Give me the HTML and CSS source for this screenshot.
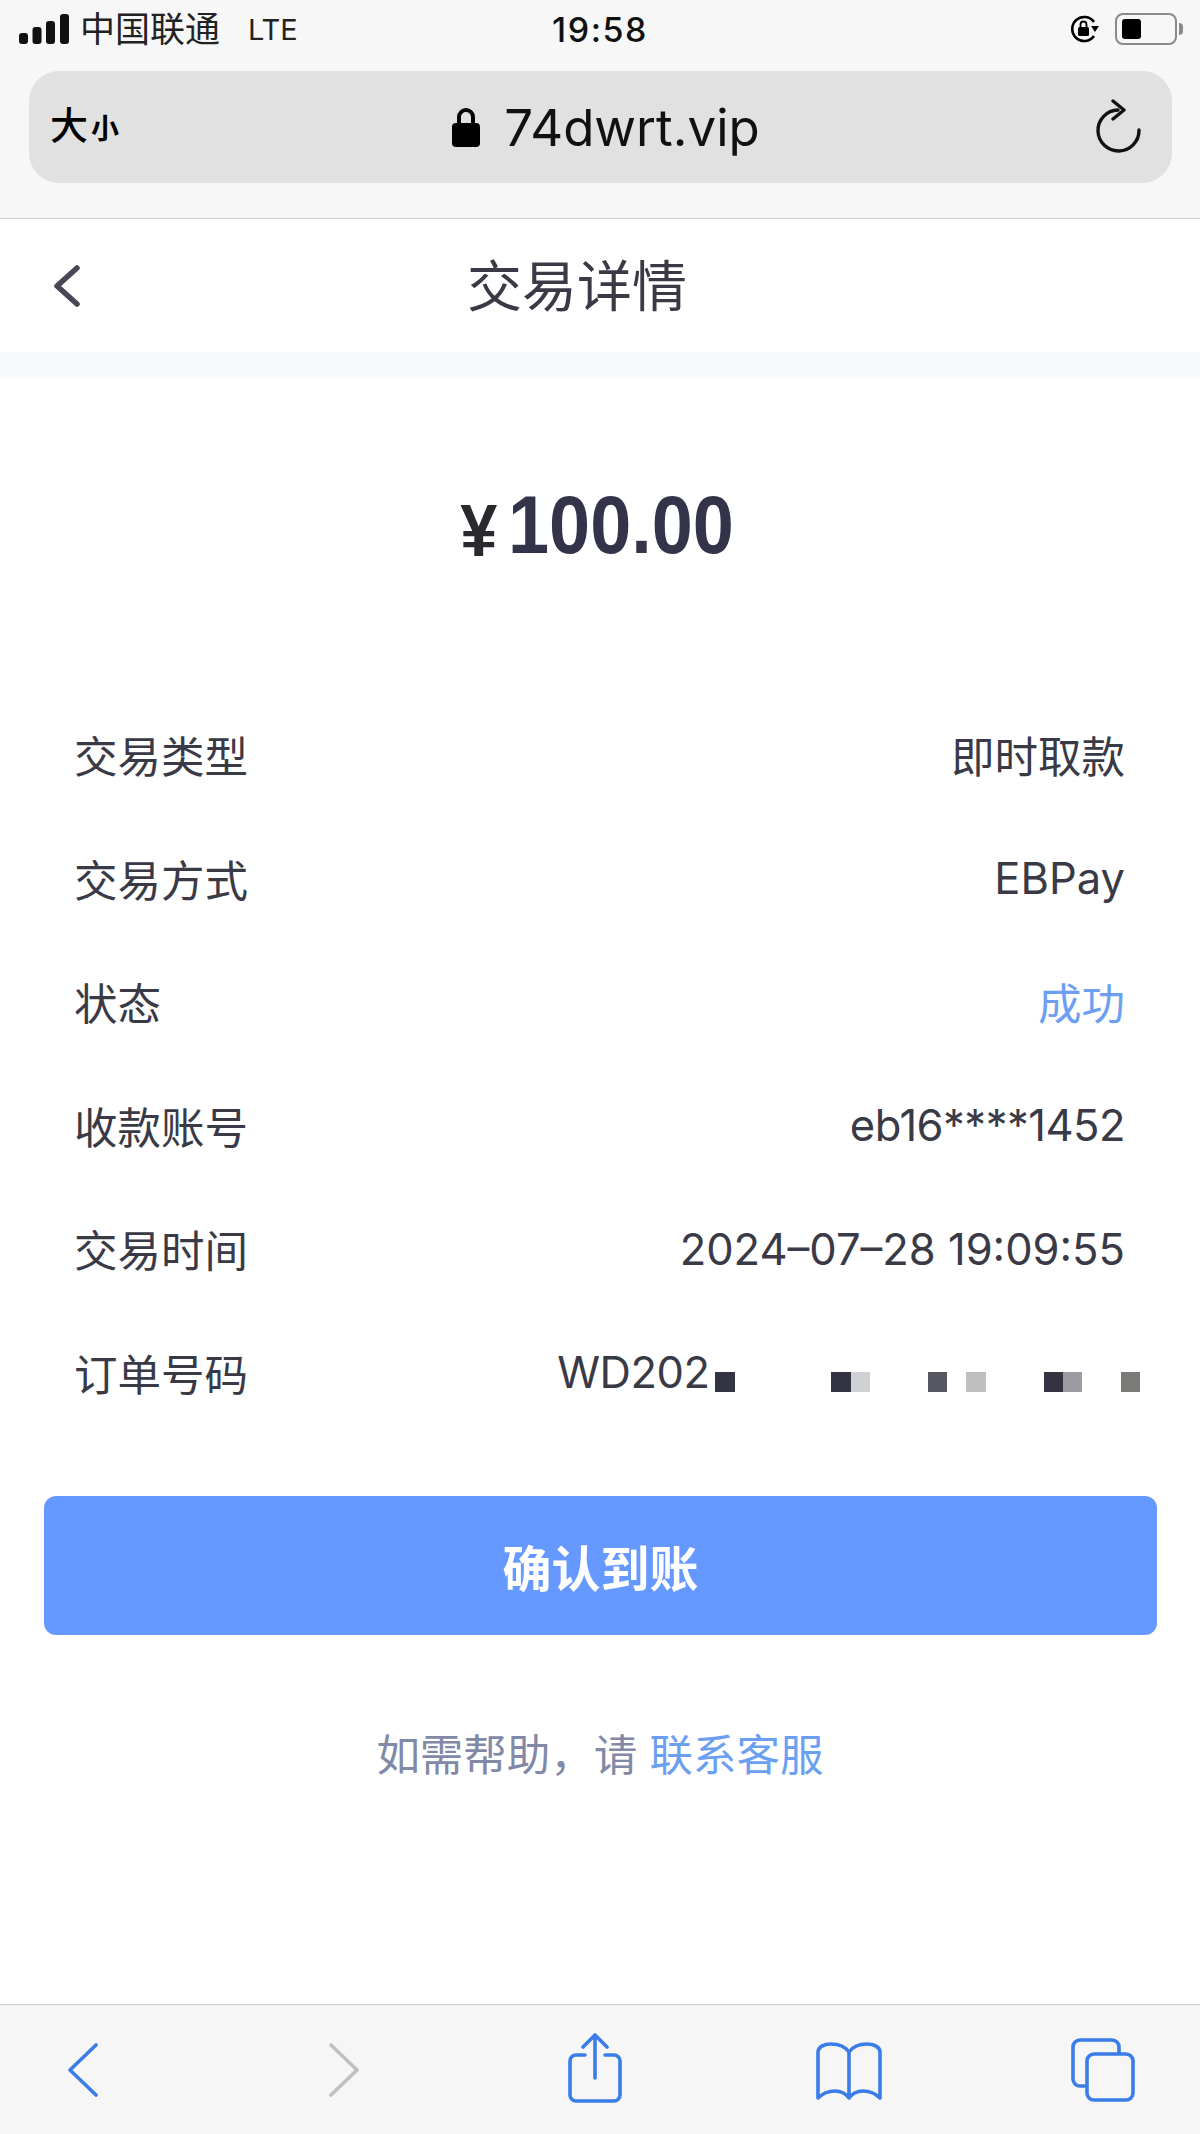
FILE: index.html
```html
<!DOCTYPE html>
<html lang="zh-CN">

<head>
    <meta charset="UTF-8">
    <meta name="viewport" content="width=device-width, initial-scale=1.0">
    <title>交易详情</title>
    <link rel="stylesheet" href="styles.css">
</head>

<body>
    <div class="browser-top">
        <div class="status-bar">
            <div class="status-left">
                <svg class="signal" width="50" height="30" viewBox="0 0 50 30">
                    <rect x="0" y="19" width="9" height="11" rx="3" />
                    <rect x="13.500" y="13" width="9" height="17" rx="3" />
                    <rect x="27" y="7" width="9" height="23" rx="3" />
                    <rect x="41" y="0" width="9" height="30" rx="3" />
                </svg>
                <span class="carrier">中国联通</span>
                <span class="network">LTE</span>
            </div>
            <div class="clock">19:58</div>
            <div class="status-right">
                <svg width="30" height="28" viewBox="0 0 30 28">
                    <path d="M25 7A12 12 0 1 0 25 21" fill="none" stroke="#000" stroke-width="2.600" />
                    <path d="M22 11h8l-4 6z" />
                    <rect x="9" y="12" width="11" height="9" rx="1.500" />
                    <path d="M11.500 12V9.500a3 3 0 0 1 6 0V12" fill="none" stroke="#000" stroke-width="1.800" />
                </svg>
                <div class="battery">
                    <div class="battery-fill"></div>
                </div>
                <div class="battery-nub"></div>
            </div>
        </div>

        <div class="url-bar">
            <div class="text-size">大<small>小</small></div>
            <div class="address">
                <svg width="28" height="40" viewBox="0 0 28 40">
                    <path d="M7 18V10a7 7 0 0 1 14 0v8" fill="none" stroke="#000" stroke-width="4" />
                    <rect x="0" y="16" width="28" height="24" rx="4" />
                </svg>
                <span>74dwrt.vip</span>
            </div>
            <svg class="reload" width="46" height="56" viewBox="0 0 46 56">
                <path d="M44 31A20.500 20.500 0 1 1 23 11" fill="none" stroke="#111" stroke-width="3.400" stroke-linecap="round" />
                <path d="M18 2L29 11L18 20" fill="none" stroke="#111" stroke-width="3.400" stroke-linecap="round" stroke-linejoin="round" />
            </svg>
        </div>
    </div>

    <div class="nav">
        <svg class="nav-back" width="26" height="42" viewBox="0 0 26 42">
            <path d="M23 3L3 21L23 39" fill="none" stroke="#474755" stroke-width="5.500" stroke-linecap="round" stroke-linejoin="round" />
        </svg>
        <h1>交易详情</h1>
    </div>
    <div class="band"></div>

    <main class="content">
        <div class="amount">
            <div class="amount-inner"><span class="yen">¥</span>100.00</div>
        </div>

        <div class="rows">
            <div class="row"><span>交易类型</span><span>即时取款</span></div>
            <div class="row"><span>交易方式</span><span>EBPay</span></div>
            <div class="row"><span>状态</span><span class="success">成功</span></div>
            <div class="row"><span>收款账号</span><span class="tight">eb16****1452</span></div>
            <div class="row"><span>交易时间</span><span>2024–07–28 19:09:55</span></div>
            <div class="row">
                <span>订单号码</span>
                <div class="order">
                    <span class="tight">WD202</span>
                    <div class="mosaic">
                        <i class="dark"></i><i></i><i></i><i></i><i></i><i></i>
                        <i class="dark"></i><i class="pale"></i><i></i><i></i><i></i>
                        <i class="mid"></i><i></i><i class="silver"></i><i></i><i></i><i></i>
                        <i class="dark"></i><i class="grey"></i><i></i><i></i>
                        <i class="olive"></i>
                    </div>
                </div>
            </div>
        </div>

        <button class="confirm" type="button">确认到账</button>

        <p class="help">如需帮助，请 <a href="#">联系客服</a></p>
    </main>

    <div class="toolbar">
        <svg class="tool-back" width="30" height="54" viewBox="0 0 30 54">
            <path d="M28 2L2 27L28 52" fill="none" stroke="#3b7de8" stroke-width="3.600" stroke-linecap="round" stroke-linejoin="round" />
        </svg>
        <svg class="tool-forward" width="30" height="54" viewBox="0 0 30 54">
            <path d="M2 2L28 27L2 52" fill="none" stroke="#c0c0c0" stroke-width="3.600" stroke-linecap="round" stroke-linejoin="round" />
        </svg>
        <svg class="tool-share" width="54" height="70" viewBox="0 0 54 70">
            <path d="M17 22H8a6 6 0 0 0-6 6v34a6 6 0 0 0 6 6h38a6 6 0 0 0 6-6V28a6 6 0 0 0-6-6H37" fill="none" stroke="#3b7de8" stroke-width="3.600" stroke-linecap="round" />
            <path d="M27 45V2M15 14L27 2L39 14" fill="none" stroke="#3b7de8" stroke-width="3.600" stroke-linecap="round" stroke-linejoin="round" />
        </svg>
        <svg class="tool-book" width="66" height="58" viewBox="0 0 66 58">
            <path d="M33 10C28 3 21 2 15 2C8 2 2 5 2 10V56C8 50 14 49 19 49C25 49 30 52 33 56C36 52 41 49 47 49C52 49 58 50 64 56V10C64 5 58 2 51 2C45 2 38 3 33 10V56" fill="none" stroke="#3b7de8" stroke-width="3.600" stroke-linecap="round" stroke-linejoin="round" />
        </svg>
        <svg class="tool-tabs" width="64" height="64" viewBox="0 0 64 64">
            <path d="M48 16V9a7 7 0 0 0-7-7H9a7 7 0 0 0-7 7v32a7 7 0 0 0 7 7h7" fill="none" stroke="#3b7de8" stroke-width="3.600" />
            <rect x="16" y="16" width="46" height="46" rx="7" fill="none" stroke="#3b7de8" stroke-width="3.600" />
        </svg>
    </div>
</body>

</html>
```

FILE: styles.css
```css
* {
    box-sizing: border-box;
}

html,
body {
    margin: 0;
    padding: 0;
}

body {
    width: 1200px;
    height: 2134px;
    display: flex;
    flex-direction: column;
    overflow: hidden;
    background: #fff;
    color: #3a3a46;
    font-family: Inter, "Noto Sans CJK SC", sans-serif;
}

/* safari top */
.browser-top {
    height: 219px;
    padding: 0 19px;
    background: #f7f7f7;
    border-bottom: 1px solid #cfcfcf;
    color: #000;
}

.status-bar {
    height: 71px;
    padding-bottom: 13px;
    display: grid;
    grid-template-columns: 1fr auto 1fr;
    align-items: center;
}

.status-left {
    display: flex;
    align-items: center;
}

.signal {
    fill: #111;
}

.carrier {
    margin-left: 11px;
    font-size: 35px;
    line-height: 40px;
    color: #222;
}

.network {
    margin-left: 28px;
    font-size: 29px;
    color: #222;
}

.clock {
    font-size: 34px;
    font-weight: 500;
    letter-spacing: 1.500px;
    color: #111;
}

.status-right {
    display: flex;
    align-items: center;
    justify-content: flex-end;
}

.battery {
    width: 62px;
    height: 32px;
    margin-left: 16px;
    padding: 4px 5px;
    border: 2px solid #8a8a8a;
    border-radius: 8px;
}

.battery-fill {
    width: 19px;
    height: 100%;
    background: #000;
    border-radius: 3px;
}

.battery-nub {
    width: 4px;
    height: 12px;
    margin: 0 -2px 0 2px;
    background: #8a8a8a;
    border-radius: 0 4px 4px 0;
}

.url-bar {
    height: 112px;
    margin: 0 9px 0 10px;
    padding: 0 31px 0 21px;
    display: grid;
    grid-template-columns: 1fr auto 1fr;
    align-items: center;
    background: #e1e1e1;
    border-radius: 30px;
}

.text-size {
    font-size: 38px;
    font-weight: 500;
    line-height: 44px;
}

.text-size small {
    margin-left: 3px;
    font-size: 28px;
    font-weight: 700;
}

.address {
    display: flex;
    align-items: center;
    gap: 24px;
    margin-left: 21px;
    font-size: 51px;
    color: #111;
}

.reload {
    justify-self: end;
}

/* page header */
.nav {
    height: 133px;
    padding-left: 54px;
    display: flex;
    align-items: center;
    position: relative;
}

.nav h1 {
    position: absolute;
    left: 0;
    right: 46px;
    margin: 0;
    text-align: center;
    font-size: 55px;
    font-weight: 400;
    line-height: 126px;
    color: #3a3a46;
}

.nav-back {
    display: block;
}

.band {
    height: 26px;
    background: #f8f9fd;
}

.content {
    flex: 1;
    display: flex;
    flex-direction: column;
}

.amount {
    height: 315px;
    padding-top: 91px;
    text-align: center;
    font-family: "Liberation Sans", sans-serif;
    font-size: 82px;
    font-weight: 700;
    line-height: 112px;
    color: #33334a;
}

/* digits in the shot are a narrow din-like face */
.amount-inner {
    display: inline-block;
    margin-right: 6px;
    transform: scaleX(.9);
}

.yen {
    margin-right: 12px;
    font-size: 74px;
    vertical-align: -3px;
    color: #2a2a2e;
}

.rows {
    padding: 0 75px 0 74px;
}

.row {
    height: 123.500px;
    display: flex;
    align-items: center;
    justify-content: space-between;
    font-size: 43.500px;
}

.success {
    color: #6c9ff2;
}

.tight {
    letter-spacing: -.5px;
}

.order {
    display: flex;
    align-items: center;
    margin-right: -15px;
}

.mosaic {
    display: grid;
    grid-template-columns: repeat(22, 19.300px);
    grid-auto-rows: 20px;
    margin: 20px 0 0 6px;
}

.dark {
    background: #333342;
}

.pale {
    background: #cfd0d4;
}

.mid {
    background: #575762;
}

.silver {
    background: #bfbfc1;
}

.grey {
    background: #9b9ba1;
}

.olive {
    background: #7a7a76;
}

.confirm {
    display: block;
    width: 1113px;
    height: 139px;
    margin: 62px 0 0 44px;
    padding: 0;
    border: none;
    border-radius: 12px;
    background: #6699ff;
    color: #fff;
    font-family: inherit;
    font-size: 49px;
    font-weight: 700;
}

.help {
    margin: 91px 0 0;
    text-align: center;
    font-size: 43.500px;
    line-height: 58px;
    color: #8189a6;
}

.help a {
    color: #6c9ff2;
    text-decoration: none;
}

/* safari bottom */
.toolbar {
    height: 130px;
    position: relative;
    background: #f6f6f6;
    border-top: 1px solid #cfcfcf;
}

.toolbar svg {
    position: absolute;
}

.tool-back {
    left: 68px;
    top: 38px;
}

.tool-forward {
    left: 329px;
    top: 38px;
}

.tool-share {
    left: 568px;
    top: 28px;
}

.tool-book {
    left: 816px;
    top: 37px;
}

.tool-tabs {
    left: 1071px;
    top: 33px;
}
```
